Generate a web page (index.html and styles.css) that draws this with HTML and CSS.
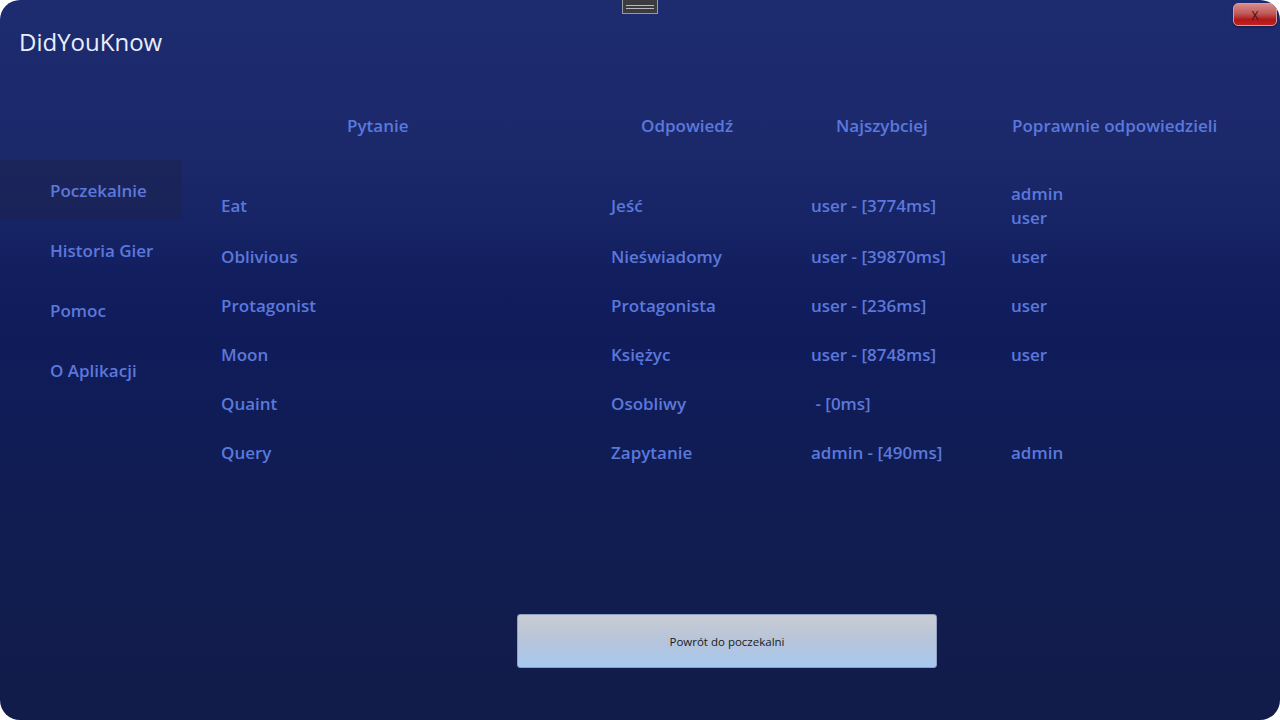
FILE: index.html
```html
<!DOCTYPE html>
<html lang="pl">
<head>
<meta charset="utf-8">
<title>DidYouKnow</title>
<link rel="stylesheet" href="styles.css">
</head>
<body>
<div class="window">
  <div class="handle"><span></span><span></span></div>
  <button class="close">X</button>
  <header class="titlebar">DidYouKnow</header>
  <div class="main">
    <nav class="sidebar">
      <div class="nav-item active">Poczekalnie</div>
      <div class="nav-item">Historia Gier</div>
      <div class="nav-item">Pomoc</div>
      <div class="nav-item">O Aplikacji</div>
    </nav>
    <section class="content">
      <div class="grid head">
        <div class="h1">Pytanie</div>
        <div class="h2">Odpowiedź</div>
        <div class="h3">Najszybciej</div>
        <div class="h4">Poprawnie odpowiedzieli</div>
      </div>
      <div class="rows">
        <div class="grid row"><div>Eat</div><div>Jeść</div><div>user - [3774ms]</div><div class="multi"><span>admin</span><span>user</span></div></div>
        <div class="grid row"><div>Oblivious</div><div>Nieświadomy</div><div>user - [39870ms]</div><div>user</div></div>
        <div class="grid row"><div>Protagonist</div><div>Protagonista</div><div>user - [236ms]</div><div>user</div></div>
        <div class="grid row"><div>Moon</div><div>Księżyc</div><div>user - [8748ms]</div><div>user</div></div>
        <div class="grid row"><div>Quaint</div><div>Osobliwy</div><div>&nbsp;- [0ms]</div><div></div></div>
        <div class="grid row"><div>Query</div><div>Zapytanie</div><div>admin - [490ms]</div><div>admin</div></div>
      </div>
      <button class="back">Powrót do poczekalni</button>
    </section>
  </div>
</div>
</body>
</html>
```
FILE: styles.css
```css
* { box-sizing: border-box; }
html, body { margin: 0; padding: 0; background: #ffffff; }
body { width: 1280px; height: 720px; overflow: hidden; font-family: "Open Sans", "Noto Sans", sans-serif; }

.window {
  position: relative;
  width: 1280px;
  height: 720px;
  border-radius: 20px;
  overflow: hidden;
  background: linear-gradient(180deg, #1d2b6f 0%, #1b296b 22%, #101c5c 42%, #111c52 70%, #121c4a 100%);
}

.handle {
  position: absolute;
  left: 622px;
  top: 0;
  width: 36px;
  height: 14px;
  background: #3b3b40;
  border: 1px solid #9a9aa4;
  border-top: none;
  display: flex;
  flex-direction: column;
  justify-content: center;
  align-items: center;
  gap: 2px;
}
.handle span { display: block; width: 28px; height: 1px; background: #b8b8c0; }

.close {
  position: absolute;
  top: 3px;
  right: 3px;
  width: 44px;
  height: 23px;
  border: 1px solid #d99;
  border-radius: 5px;
  background: linear-gradient(180deg, #d98a8a 0%, #c05a5a 45%, #b01818 75%, #c02020 100%);
  color: #3a1010;
  font-family: "Open Sans", sans-serif;
  font-size: 12px;
  line-height: 20px;
  padding: 0;
  padding-top: 2px;
  box-shadow: 0 1px 2px rgba(0,0,0,0.4);
}

.titlebar {
  height: 84px;
  padding-left: 19px;
  padding-top: 26px;
  color: #e8eefc;
  font-size: 24px;
  line-height: 32px;
  font-weight: 400;
}

.main { display: flex; }

.sidebar { width: 182px; padding-top: 76px; flex: none; }
.nav-item {
  height: 60px;
  padding-left: 50px;
  display: flex;
  align-items: center;
  color: #5b78dc;
  font-size: 17px;
  font-weight: 600;
}
.nav-item.active { background: rgba(28, 36, 84, 0.7); }

.content { flex: 1; padding-left: 39px; color: #5b78dc; font-size: 17px; font-weight: 600; }

.grid { display: grid; grid-template-columns: 390px 200px 200px 1fr; }
.head { margin-top: 30px; line-height: 24px; }
.h1 { padding-left: 126px; }
.h2 { padding-left: 30px; }
.h3 { padding-left: 25px; }
.h4 { padding-left: 1px; }

.rows { margin-top: 41px; }
.row { min-height: 49px; padding: 2.5px 0; align-items: center; line-height: 24px; }
.multi { display: flex; flex-direction: column; }

.back {
  display: block;
  margin-top: 137px;
  margin-left: 296px;
  width: 420px;
  height: 54px;
  border: 1px solid #8fa0c0;
  border-radius: 3px;
  background: linear-gradient(180deg, #c9ccd3 0%, #b6c4da 50%, #a6c8f0 100%);
  color: #1a1a1a;
  font-family: "Open Sans", sans-serif;
  font-size: 11.5px;
  font-weight: 400;
}
```
